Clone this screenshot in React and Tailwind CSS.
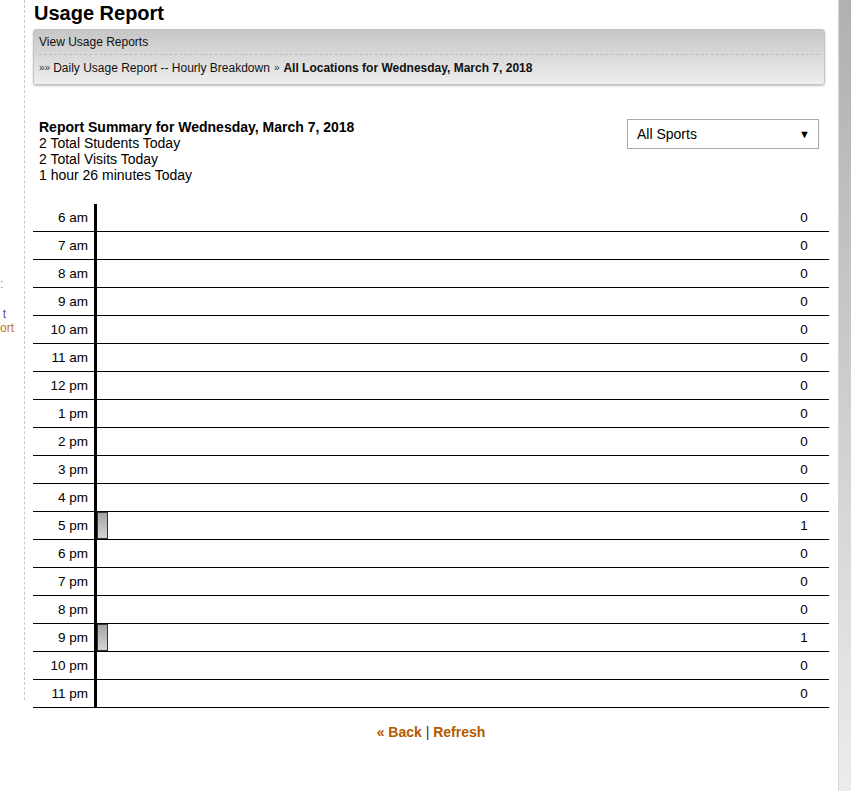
import React from "react";

const hours = [
  ["6 am", 0], ["7 am", 0], ["8 am", 0], ["9 am", 0], ["10 am", 0], ["11 am", 0],
  ["12 pm", 0], ["1 pm", 0], ["2 pm", 0], ["3 pm", 0], ["4 pm", 0], ["5 pm", 1],
  ["6 pm", 0], ["7 pm", 0], ["8 pm", 0], ["9 pm", 1], ["10 pm", 0], ["11 pm", 0],
];

export default function App() {
  return (
    <div
      className="flex w-[851px] h-[791px] bg-white text-black overflow-hidden"
      style={{ fontFamily: '"Liberation Sans", Arial, sans-serif' }}
    >
      {/* clipped sidebar */}
      <div className="w-[25px] h-[700px] shrink-0 border-r border-dashed border-[#c8c8c8] overflow-hidden flex flex-col text-[12px] leading-[14px]">
        <div className="mt-[277px] text-right pr-[22px] text-[#8a7fd0]">:</div>
        <div className="mt-[16px] text-right pr-[18px] text-[#5a4fa0]">t</div>
        <div className="text-right pr-[11px] text-[#c0751c]">ort</div>
      </div>

      {/* main */}
      <div className="flex-1 flex flex-col pl-[8px] pr-[9px]">
        <h1 className="text-[20px] font-bold leading-[22px] mt-[2px] h-[26px] pl-[1px]">Usage Report</h1>

        <div className="mt-[1px] mr-[4px] h-[56px] rounded-[3px] border border-[#c4c4c4] shadow-[0_1px_2px_rgba(0,0,0,0.25)] bg-gradient-to-b from-[#c6c6c6] to-[#eeeeee] px-[5px] text-[12px] text-[#111]">
          <div className="h-[25px] flex items-center border-b border-dashed border-[#bdbdbd]">View Usage Reports</div>
          <div className="h-[25px] flex items-center">
            <span className="text-[10px] text-[#333] mr-[3px]">»»</span>
            <span>Daily Usage Report -- Hourly Breakdown</span>
            <span className="text-[10px] text-[#333] mx-[4px]">»</span>
            <span className="font-bold">All Locations for Wednesday, March 7, 2018</span>
          </div>
        </div>

        <div className="mt-[34px] flex items-start justify-between pl-[6px] pr-[10px]">
          <div className="text-[14px] leading-[16px]">
            <div className="font-bold">Report Summary for Wednesday, March 7, 2018</div>
            <div>2 Total Students Today</div>
            <div>2 Total Visits Today</div>
            <div>1 hour 26 minutes Today</div>
          </div>
          <div className="w-[192px] h-[30px] border border-[#a9a9a9] flex items-center justify-between pl-[9px] pr-[8px] text-[14px]">
            <span>All Sports</span>
            <span className="text-[11px]">▼</span>
          </div>
        </div>

        <div className="mt-[21px] flex flex-col">
          {hours.map(([h, v]) => (
            <div key={h} className="flex h-[28px] border-b border-black">
              <div className="w-[64px] shrink-0 border-r-[3px] border-black text-right pr-[6px] text-[13.5px] leading-[27px]">
                {h}
              </div>
              <div className="flex-1 flex">
                {v > 0 && (
                  <div className="w-[11px] h-[27px] border border-[#333] bg-gradient-to-b from-[#a4a4a4] to-[#d4d4d4]" />
                )}
              </div>
              <div className="w-[46px] shrink-0 text-center text-[13.5px] leading-[27px] mr-[2px]">{v}</div>
            </div>
          ))}
        </div>

        <div className="mt-[15px] text-center text-[14px] font-bold leading-[18px]">
          <span className="text-[#b35a00]">« Back</span>
          <span className="font-normal text-[#333]"> | </span>
          <span className="text-[#b35a00]">Refresh</span>
        </div>
      </div>

      {/* right strip */}
      <div className="w-[13px] shrink-0 border-l border-[#d8d8d8] bg-gradient-to-b from-[#b0b0b0] to-[#ececec]" />
    </div>
  );
}
